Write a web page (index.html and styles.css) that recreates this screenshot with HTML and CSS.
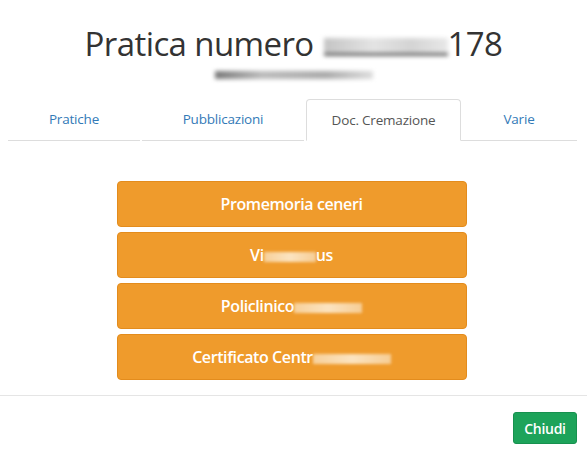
FILE: index.html
```html
<!DOCTYPE html>
<html lang="it">
<head>
<meta charset="utf-8">
<link rel="stylesheet" href="styles.css">
</head>
<body>
<div class="modal">
  <div class="modal-header">
    <h1 class="title">Pratica numero <span class="blur blur-title"></span>178</h1>
    <div class="subtitle"><span class="blur blur-sub"></span></div>
  </div>
  <div class="modal-body">
    <ul class="tabs">
      <li class="tab t1"><a>Pratiche</a></li>
      <li class="tab t2"><a>Pubblicazioni</a></li>
      <li class="tab t3 active"><a>Doc. Cremazione</a></li>
      <li class="tab t4"><a>Varie</a></li>
    </ul>
    <div class="actions">
      <button class="btn-doc">Promemoria ceneri</button>
      <button class="btn-doc">Vi<span class="blur blur-w b1"></span>us</button>
      <button class="btn-doc">Policlinico<span class="blur blur-w b2"></span></button>
      <button class="btn-doc">Certificato Centr<span class="blur blur-w b3"></span></button>
    </div>
  </div>
  <div class="modal-footer">
    <button class="btn-close">Chiudi</button>
  </div>
</div>
</body>
</html>
```
FILE: styles.css
```css
* { box-sizing: border-box; }
html, body { margin: 0; padding: 0; background: #fff; }
body {
  font-family: "Open Sans", "Noto Sans", sans-serif;
  color: #333;
  width: 587px;
  height: 450px;
  overflow: hidden;
}
.modal-header {
  text-align: center;
  padding-top: 22px;
  height: 99px;
}
.title {
  margin: 0;
  font-weight: 400;
  font-size: 33px;
  line-height: 44px;
  letter-spacing: -0.6px;
  color: #333;
}
.blur {
  display: inline-block;
  vertical-align: middle;
  filter: blur(2px);
}
.blur-title {
  width: 124px;
  height: 18px;
  background: linear-gradient(90deg, #c4c4c4, #e4e4e4 40%, #d4d4d4 70%, #e8e8e8);
  border-bottom: 3px solid #666;
  margin: 0 0 0 2px;
}
.subtitle {
  height: 20px;
  line-height: 14px;
}
.blur-sub {
  width: 158px;
  height: 8px;
  background: linear-gradient(90deg, #777, #bbb 30%, #aaa 70%, #ddd);
}
.modal-body {
  padding: 0 10px 0 8px;
  height: 296px;
}
.tabs {
  list-style: none;
  margin: 0;
  padding: 0;
  display: grid;
  grid-template-columns: 134px 164px 155px 116px;
  height: 42px;
}
.tab a {
  display: block;
  height: 42px;
  line-height: 40px;
  text-align: center;
  font-size: 13.5px;
  color: #337ab7;
  border-bottom: 1px solid #ddd;
  margin-right: 2px;
  letter-spacing: -0.2px;
}
.tab.t4 a { margin-right: 0; }
.tab.active a {
  color: #555;
  border: 1px solid #ddd;
  border-bottom-color: transparent;
  border-radius: 4px 4px 0 0;
  margin-right: 0;
}
.actions {
  display: flex;
  flex-direction: column;
  align-items: center;
  gap: 5px;
  padding-top: 40px;
  padding-right: 2px;
}
.btn-doc {
  width: 350px;
  height: 46px;
  background: #ef9b2c;
  border: 1px solid #e38c1d;
  border-radius: 4px;
  color: #fff;
  font-family: "Open Sans", "Noto Sans", sans-serif;
  font-size: 16px;
  font-weight: 600;
  letter-spacing: -0.4px;
  padding: 0;
}
.blur-w {
  height: 10px;
  background: linear-gradient(90deg, #f7d09a, #fbe3c0 50%, #f6cd95);
  filter: blur(1.5px);
  vertical-align: -1px;
}
.b1 { width: 52px; }
.b2 { width: 68px; }
.b3 { width: 78px; }
.modal-footer {
  border-top: 1px solid #e5e5e5;
  display: flex;
  justify-content: flex-end;
  padding: 16px 10px 0 0;
}
.btn-close {
  width: 64px;
  height: 32px;
  background: #1da35a;
  border: 1px solid #17914f;
  border-radius: 3px;
  color: #fff;
  font-family: "Open Sans", "Noto Sans", sans-serif;
  font-size: 14px;
  font-weight: 600;
  letter-spacing: -0.3px;
  padding: 0;
}
```
